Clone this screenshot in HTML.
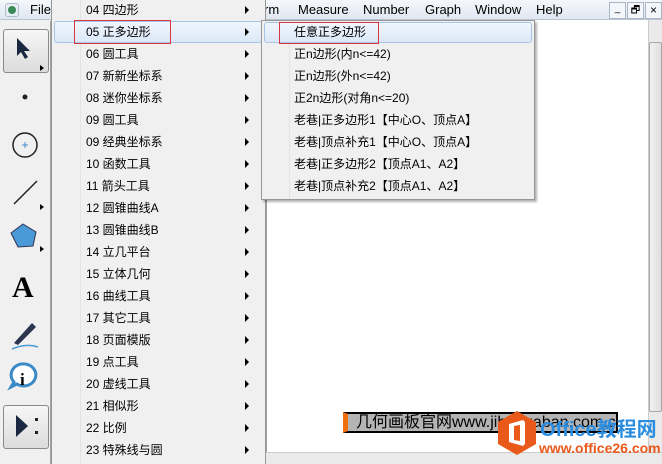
<!DOCTYPE html>
<html><head><meta charset="utf-8"><style>
*{margin:0;padding:0;box-sizing:border-box}
body{width:662px;height:464px;overflow:hidden;position:relative;background:#f0f0f0;font-family:"Liberation Sans","Noto Sans CJK SC",sans-serif;font-size:12px;color:#000}
.abs{position:absolute}
.menubar{left:0;top:0;width:662px;height:20px;background:linear-gradient(#f5f8fc,#dfe7f1);border-bottom:1px solid #b9c4d2}
.mb{top:2px;font-size:13px}
.menu{left:51px;top:0;width:215px;height:464px;background:#f0f0f0;border-left:1px solid #979797;border-right:1px solid #979797}
.gut{position:absolute;top:0;bottom:0;left:28px;border-left:1px solid #e2e3e3}
.it{position:absolute;left:34px;height:22px;line-height:20px;font-size:12px}
.ar{position:absolute;left:193px;width:0;height:0;border-left:4px solid #000;border-top:4px solid transparent;border-bottom:4px solid transparent}
.hl{position:absolute;border:1px solid #a8c4e6;border-radius:3px;background:linear-gradient(#f1f6fd,#dbe8f8)}
.sub{left:261px;top:20px;width:274px;height:180px;background:#f0f0f0;border:1px solid #979797;box-shadow:2px 2px 2px rgba(0,0,0,.3)}
.si{position:absolute;left:32px;height:22px;line-height:20px;font-size:12px}
.tb{left:0;top:21px;width:51px;height:443px;background:#f0f0f0;border-right:1px solid #a0a0a0}
.btn{position:absolute;left:3px;width:46px;height:44px;border:1px solid #8a8a8a;border-radius:3px;background:linear-gradient(#f6f6f6,#dcdcdc)}
</style></head><body>
<div class="abs menubar"></div>
<div class="abs" style="left:5px;top:3px;width:14px;height:14px;border-radius:3px;background:#e8eef5;border:1px solid #b0bccb"><div style="margin:2px;width:8px;height:8px;border-radius:50%;background:#3a8a5a"></div></div>
<div class="abs mb" style="left:30px">File</div>
<div class="abs mb" style="left:264px">rm</div>
<div class="abs mb" style="left:298px">Measure</div>
<div class="abs mb" style="left:363px">Number</div>
<div class="abs mb" style="left:425px">Graph</div>
<div class="abs mb" style="left:475px">Window</div>
<div class="abs mb" style="left:536px">Help</div>
<div class="abs" style="left:609px;top:2px;width:17px;height:17px;border:1px solid #a9b6c6;background:#f3f6fa;font-size:10px;text-align:center">_</div>
<div class="abs" style="left:627px;top:2px;width:17px;height:17px;border:1px solid #a9b6c6;background:#f3f6fa;font-size:10px;text-align:center">🗗</div>
<div class="abs" style="left:645px;top:2px;width:17px;height:17px;border:1px solid #a9b6c6;background:#f3f6fa;font-size:12px;text-align:center">×</div>

<!-- canvas -->
<div class="abs" style="left:265px;top:20px;width:383px;height:432px;background:#fff;border-left:2px solid #a0a0a0"></div>
<div class="abs" style="left:648px;top:20px;width:14px;height:432px;background:#eaeaea;border-left:1px solid #ccc"></div>
<div class="abs" style="left:649px;top:42px;width:13px;height:370px;background:linear-gradient(90deg,#f2f2f2,#dedede);border:1px solid #a8a8a8;border-radius:2px"></div>
<div class="abs" style="left:265px;top:452px;width:397px;height:12px;background:#eaeaea;border-top:1px solid #ccc"></div>

<!-- watermark -->
<div class="abs" style="left:343px;top:412px;width:275px;height:21px;background:#b4b4b4;border:2px solid #000;font-size:16px;line-height:17px;padding-left:8px;white-space:nowrap;overflow:hidden;border-left:5px solid #f07010">几何画板官网www.jihehuaban.com.cn</div>
<svg class="abs" style="left:497px;top:410px" width="40" height="46" viewBox="0 0 40 46"><polygon points="20,1 39,12 39,34 20,45 1,34 1,12" fill="#e8591a"/><path d="M12 14 L26 10 L28 12 L28 34 L26 36 L12 32 Z M17 16 V30 L23 31 V15 Z" fill="#fff" fill-rule="evenodd"/></svg>
<div class="abs" style="left:540px;top:419px;font-size:20px;font-weight:bold;color:#2a8de0;line-height:22px">Office教程网</div>
<div class="abs" style="left:539px;top:440px;font-size:14px;font-weight:bold;color:#e8591a">www.office26.com</div>

<!-- toolbar -->
<div class="abs tb">
<div class="btn" style="top:8px"></div>
<div class="btn" style="top:384px"></div>
</div>
<svg class="abs" style="left:0;top:21px" width="51" height="443">
<path d="M17 17 L17 35 L21 31 L25 38 L28 36 L24 30 L30 30 Z" fill="#1a2740"/>
<path d="M40 44 l4 3 -4 3z" fill="#000"/>
<circle cx="25" cy="76" r="2.5" fill="#222"/>
<circle cx="25" cy="124" r="12" fill="none" stroke="#222" stroke-width="1.5"/>
<path d="M22 124h6M25 121v6" stroke="#4a8ac8"/>
<line x1="14" y1="183" x2="37" y2="160" stroke="#222" stroke-width="1.5"/>
<path d="M40 183 l4 3 -4 3z" fill="#000"/>
<polygon points="23,203 36,211 33,225 18,226 11,212" fill="#4a9ad8" stroke="#335" stroke-width="1"/>
<path d="M40 225 l4 3 -4 3z" fill="#000"/>
<text x="12" y="276" font-family="Liberation Serif" font-weight="bold" font-size="30">A</text>
<path d="M14 322 L32 302 L36 306 L18 324 Z" fill="#2a3550"/><path d="M12 328 Q26 322 38 326" stroke="#4a9ad8" fill="none" stroke-width="1.5"/>
<path d="M25 343 a12 11 0 1 1 -8 20 l-6 3 3-5 a12 11 0 0 1 11-18z" fill="#fff" stroke="#3a8ac8" stroke-width="3"/>
<text x="20" y="364" font-family="Liberation Serif" font-weight="bold" font-size="17">i</text>
<path d="M16 394 L28 405 L16 416 Z" fill="#1a2740"/><rect x="35" y="397" width="3" height="3" fill="#222"/><rect x="35" y="410" width="3" height="3" fill="#222"/>
</svg>

<!-- main menu -->
<div class="abs menu">
<div class="gut"></div>
<div class="hl" style="left:2px;top:21px;width:208px;height:22px"></div>
<div class="abs" style="left:22px;top:20px;width:97px;height:24px;border:1px solid #d9363e"></div>
<div class="it" style="top:0">04 四边形</div><div class="ar" style="top:6px"></div>
<div class="it" style="top:22px">05 正多边形</div><div class="ar" style="top:28px"></div>
<div class="it" style="top:44px">06 圆工具</div><div class="ar" style="top:50px"></div>
<div class="it" style="top:66px">07 新新坐标系</div><div class="ar" style="top:72px"></div>
<div class="it" style="top:88px">08 迷你坐标系</div><div class="ar" style="top:94px"></div>
<div class="it" style="top:110px">09 圆工具</div><div class="ar" style="top:116px"></div>
<div class="it" style="top:132px">09 经典坐标系</div><div class="ar" style="top:138px"></div>
<div class="it" style="top:154px">10 函数工具</div><div class="ar" style="top:160px"></div>
<div class="it" style="top:176px">11 箭头工具</div><div class="ar" style="top:182px"></div>
<div class="it" style="top:198px">12 圆锥曲线A</div><div class="ar" style="top:204px"></div>
<div class="it" style="top:220px">13 圆锥曲线B</div><div class="ar" style="top:226px"></div>
<div class="it" style="top:242px">14 立几平台</div><div class="ar" style="top:248px"></div>
<div class="it" style="top:264px">15 立体几何</div><div class="ar" style="top:270px"></div>
<div class="it" style="top:286px">16 曲线工具</div><div class="ar" style="top:292px"></div>
<div class="it" style="top:308px">17 其它工具</div><div class="ar" style="top:314px"></div>
<div class="it" style="top:330px">18 页面模版</div><div class="ar" style="top:336px"></div>
<div class="it" style="top:352px">19 点工具</div><div class="ar" style="top:358px"></div>
<div class="it" style="top:374px">20 虚线工具</div><div class="ar" style="top:380px"></div>
<div class="it" style="top:396px">21 相似形</div><div class="ar" style="top:402px"></div>
<div class="it" style="top:418px">22 比例</div><div class="ar" style="top:424px"></div>
<div class="it" style="top:440px">23 特殊线与圆</div><div class="ar" style="top:446px"></div>
</div>

<!-- submenu -->
<div class="abs sub">
<div class="gut" style="left:27px"></div>
<div class="hl" style="left:2px;top:1px;width:268px;height:21px"></div>
<div class="abs" style="left:17px;top:1px;width:100px;height:22px;border:1px solid #d9363e"></div>
<div class="si" style="top:1px">任意正多边形</div>
<div class="si" style="top:23px">正n边形(内n&lt;=42)</div>
<div class="si" style="top:45px">正n边形(外n&lt;=42)</div>
<div class="si" style="top:67px">正2n边形(对角n&lt;=20)</div>
<div class="si" style="top:89px">老巷|正多边形1【中心O、顶点A】</div>
<div class="si" style="top:111px">老巷|顶点补充1【中心O、顶点A】</div>
<div class="si" style="top:133px">老巷|正多边形2【顶点A1、A2】</div>
<div class="si" style="top:155px">老巷|顶点补充2【顶点A1、A2】</div>
</div>
</body></html>
